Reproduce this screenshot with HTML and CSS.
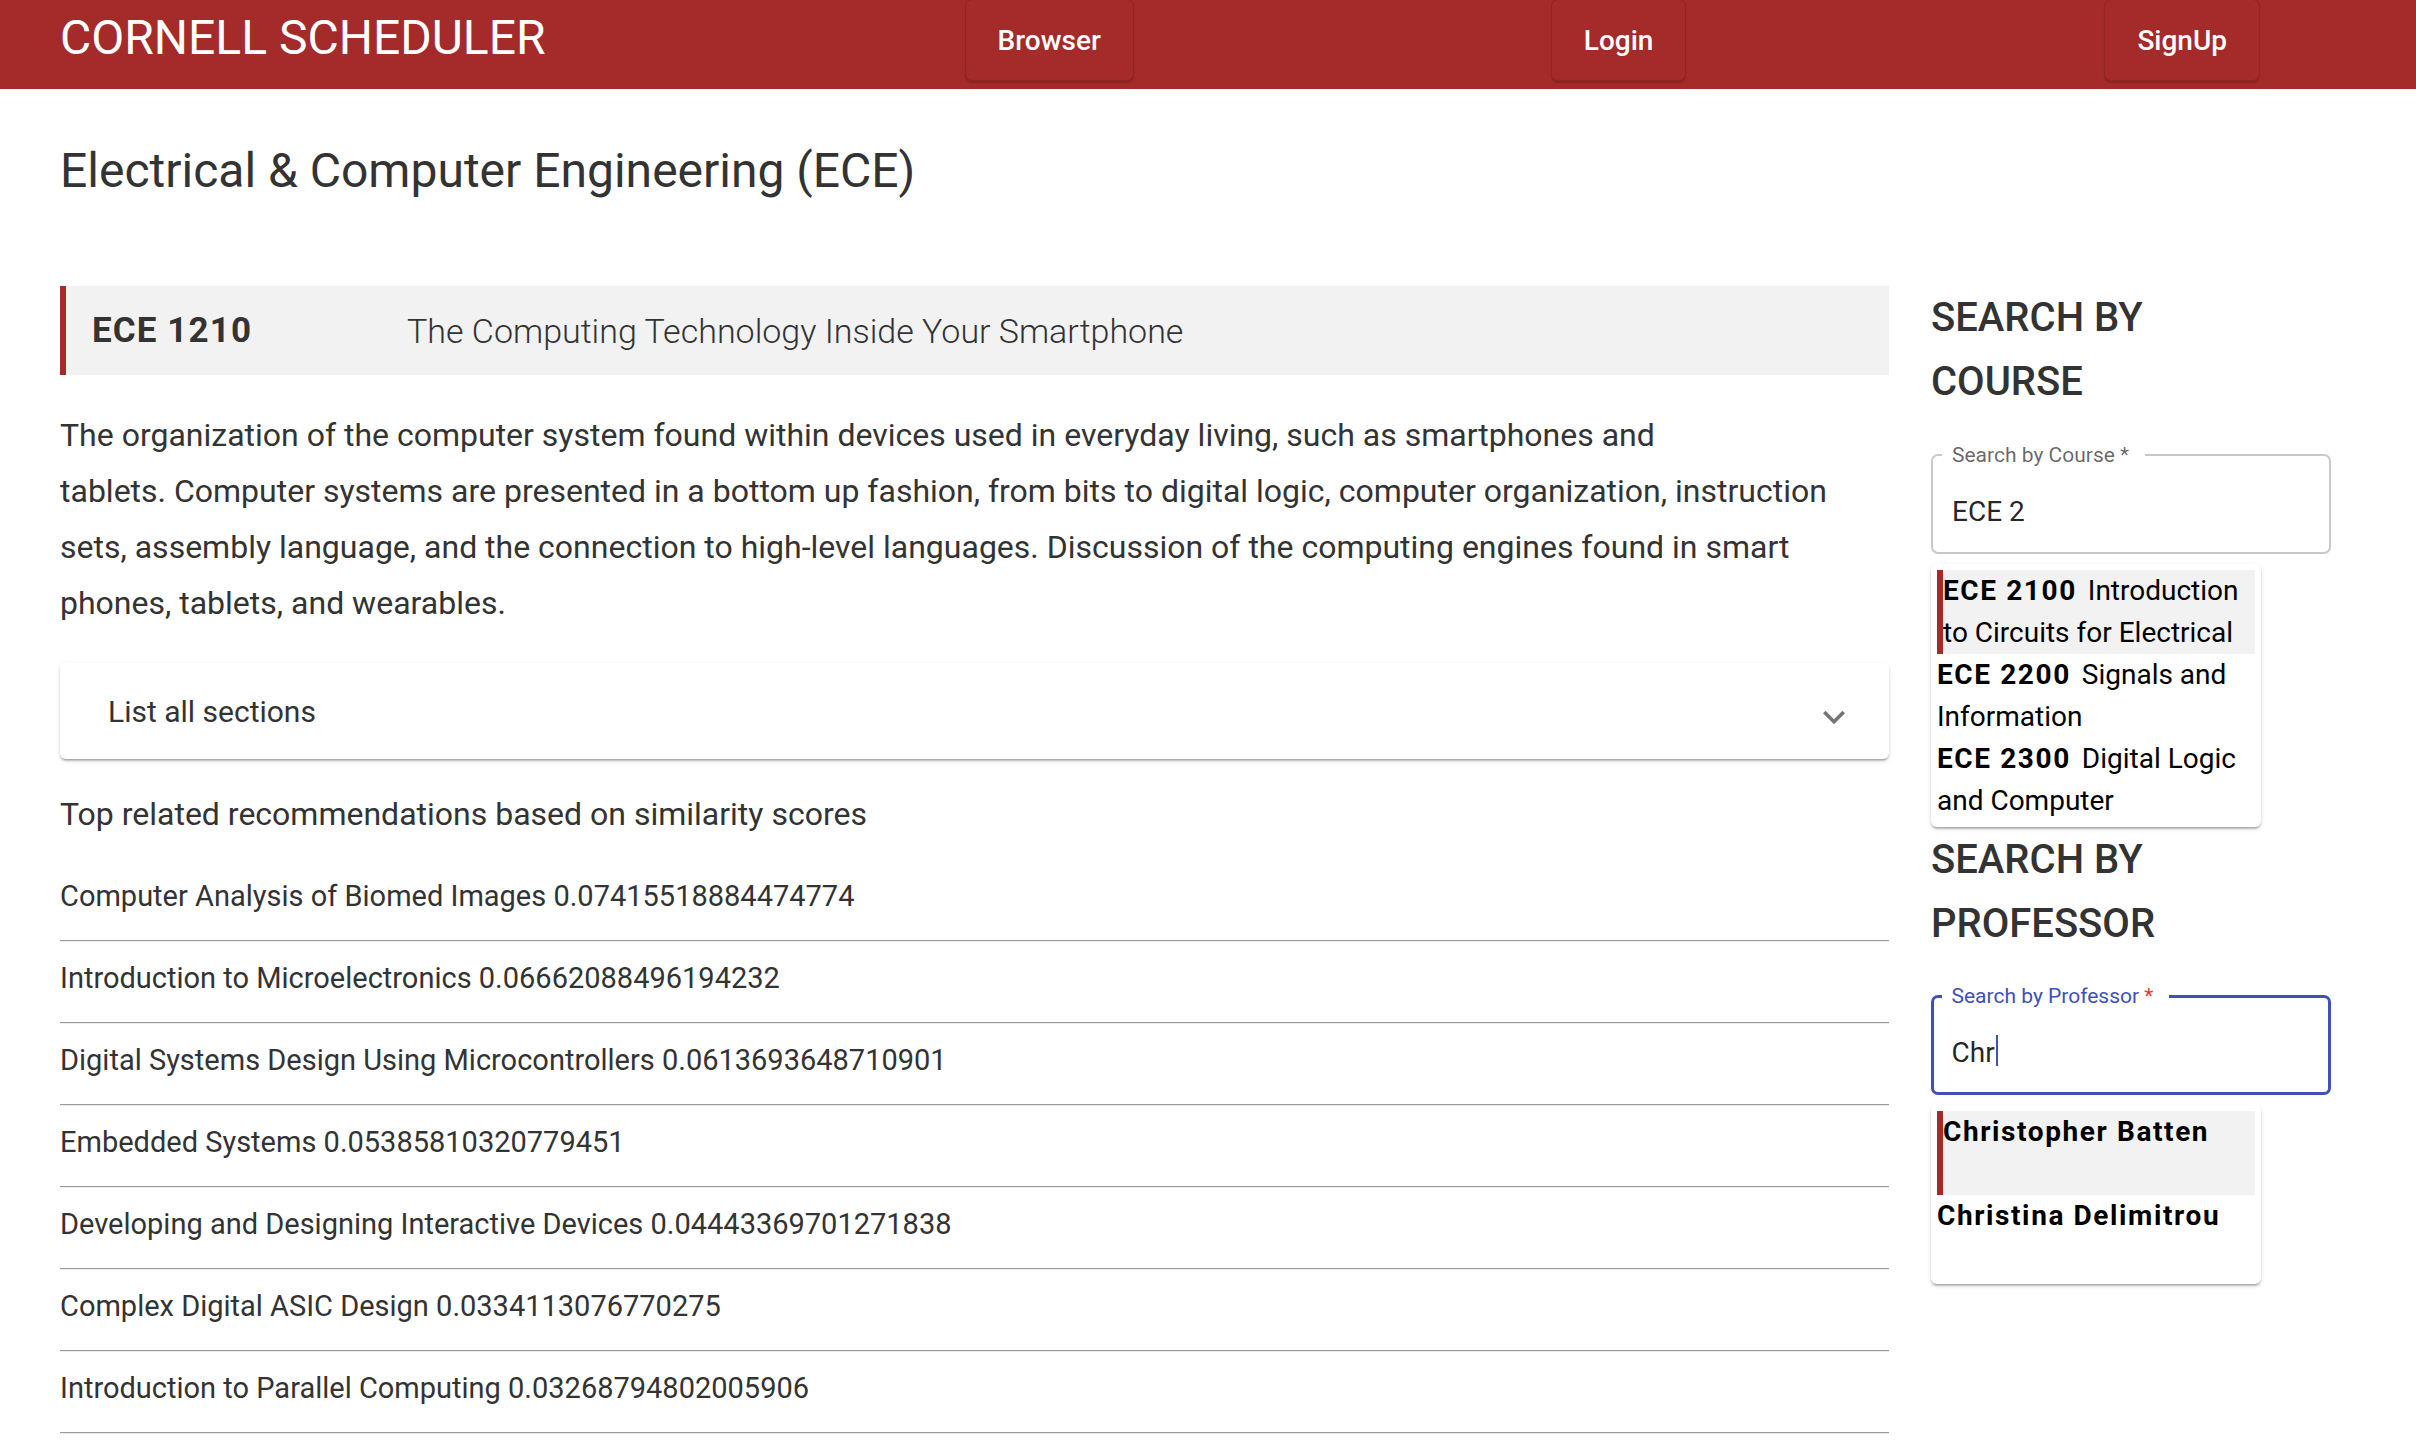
FILE: index.html
```html
<!DOCTYPE html>
<html lang="en">
<head>
<meta charset="utf-8">
<title>Cornell Scheduler</title>
<link rel="stylesheet" href="styles.css">
</head>
<body>
<header class="topbar">
  <div class="brand">CORNELL SCHEDULER</div>
  <nav class="nav">
    <button class="nav-btn">Browser</button>
    <button class="nav-btn login">Login</button>
    <button class="nav-btn signup">SignUp</button>
  </nav>
</header>
<main class="page">
  <h1 class="dept">Electrical &amp; Computer Engineering (ECE)</h1>
  <div class="layout">
    <section class="course">
      <div class="course-head">
        <span class="code">ECE 1210</span>
        <span class="name">The Computing Technology Inside Your Smartphone</span>
      </div>
      <p class="desc">The organization of the computer system found within devices used in everyday living, such as smartphones and<br>tablets. Computer systems are presented in a bottom up fashion, from bits to digital logic, computer organization, instruction<br>sets, assembly language, and the connection to high-level languages. Discussion of the computing engines found in smart<br>phones, tablets, and wearables.</p>
      <div class="accordion">
        <span class="acc-label">List all sections</span>
        <svg class="acc-icon" viewBox="0 0 24 24" width="44" height="44"><path d="M16.59 8.59 12 13.17 7.41 8.59 6 10l6 6 6-6z"/></svg>
      </div>
      <p class="rec-title">Top related recommendations based on similarity scores</p>
      <ul class="recs">
        <li><div class="rec-text">Computer Analysis of Biomed Images 0.07415518884474774</div><hr class="rule"></li>
        <li><div class="rec-text">Introduction to Microelectronics 0.06662088496194232</div><hr class="rule"></li>
        <li><div class="rec-text">Digital Systems Design Using Microcontrollers 0.0613693648710901</div><hr class="rule"></li>
        <li><div class="rec-text">Embedded Systems 0.05385810320779451</div><hr class="rule"></li>
        <li><div class="rec-text">Developing and Designing Interactive Devices 0.04443369701271838</div><hr class="rule"></li>
        <li><div class="rec-text">Complex Digital ASIC Design 0.0334113076770275</div><hr class="rule"></li>
        <li><div class="rec-text">Introduction to Parallel Computing 0.03268794802005906</div><hr class="rule"></li>
      </ul>
    </section>
    <aside class="side">
      <h2 class="side-heading">SEARCH BY COURSE</h2>
      <div class="field">
        <span class="field-label">Search by Course *</span>
        <div class="field-value">ECE 2</div>
      </div>
      <div class="menu">
        <div class="menu-item active"><div class="line"><b class="bold">ECE 2100</b> Introduction</div><div class="line">to Circuits for Electrical</div></div>
        <div class="menu-item"><div class="line"><b class="bold">ECE 2200</b> Signals and</div><div class="line">Information</div></div>
        <div class="menu-item"><div class="line"><b class="bold">ECE 2300</b> Digital Logic</div><div class="line">and Computer</div></div>
      </div>
      <h2 class="side-heading second">SEARCH BY PROFESSOR</h2>
      <div class="field focused">
        <span class="field-label">Search by Professor <span class="req">*</span></span>
        <div class="field-value">Chr<span class="caret"></span></div>
      </div>
      <div class="menu">
        <div class="menu-item active"><div class="line"><b class="bold">Christopher Batten</b></div></div>
        <div class="menu-item"><div class="line"><b class="bold">Christina Delimitrou</b></div></div>
      </div>
    </aside>
  </div>
</main>
</body>
</html>
```

FILE: styles.css
```css
* { box-sizing: border-box; }

body {
  margin: 0;
  background: #ffffff;
  font-family: Roboto, "Liberation Sans", sans-serif;
  color: #333333;
}

.topbar {
  display: flex;
  align-items: flex-start;
  height: 89px;
  background: #a52a2a;
  overflow: hidden;
}

.brand {
  padding: 10px 0 0 60px;
  font-size: 48px;
  line-height: 56px;
  font-weight: 400;
  color: #ffffff;
}

.nav {
  display: flex;
  margin-left: auto;
  padding-right: 156px;
}

.nav-btn {
  margin-top: -1px;
  height: 82px;
  padding: 0 32px;
  background: #a52a2a;
  color: #ffffff;
  font-family: Roboto, "Liberation Sans", sans-serif;
  font-size: 28px;
  font-weight: 500;
  border: 1px solid rgba(0, 0, 0, 0.12);
  border-radius: 7px;
  box-shadow: 0 2px 1px rgba(0, 0, 0, 0.14);
}

.nav-btn.login {
  margin-left: 417px;
}

.nav-btn.signup {
  margin-left: 418px;
}

.page {
  padding-left: 60px;
}

.dept {
  margin: 52px 0 0;
  font-size: 48px;
  line-height: 59px;
  font-weight: 400;
  color: #333333;
}

.layout {
  display: grid;
  grid-template-columns: 1829px 400px;
  column-gap: 42px;
  margin-top: 86px;
  align-items: start;
}

.course-head {
  display: flex;
  align-items: center;
  height: 89px;
  background: #f2f2f2;
  border-left: 6px solid #a52a2a;
  padding-left: 26px;
}

.code {
  width: 315px;
  font-size: 35px;
  font-weight: 700;
  letter-spacing: 1.1px;
  color: #333333;
}

.name {
  font-size: 34px;
  font-weight: 300;
  color: #333333;
}

.desc {
  margin: 32px 0 0;
  font-size: 32px;
  line-height: 56px;
  color: #333333;
}

.accordion {
  display: flex;
  align-items: center;
  justify-content: space-between;
  height: 96px;
  margin-top: 32px;
  padding: 0 33px 0 48px;
  background: #ffffff;
  border-radius: 6px;
  box-shadow: 0 3px 2px -2px rgba(0, 0, 0, 0.2), 0 2px 2px rgba(0, 0, 0, 0.14), 0 2px 5px rgba(0, 0, 0, 0.12);
}

.acc-label {
  font-size: 30px;
  color: #333333;
}

.acc-icon {
  margin-top: 12px;
  fill: rgba(0, 0, 0, 0.54);
}

.rec-title {
  margin: 33px 0 0;
  font-size: 32px;
  line-height: 45px;
  color: #333333;
}

.recs {
  list-style: none;
  margin: 38px 0 0;
  padding: 0;
}

.rec-text {
  font-size: 29px;
  line-height: 42px;
  color: #333333;
}

.rule {
  height: 0;
  margin: 23px 0 15px;
  border: 0;
  border-top: 1px solid #9a9a9a;
  border-bottom: 1px solid #ededed;
}

.side-heading {
  max-width: 340px;
  margin: 0;
  font-size: 40px;
  line-height: 64px;
  font-weight: 500;
  color: #333333;
}

.side-heading.second {
  margin-top: 1px;
}

.field {
  position: relative;
  height: 100px;
  margin-top: 40px;
  border: 2px solid #c8c8c8;
  border-radius: 7px;
  padding: 36px 0 0 19px;
}

.field.focused {
  margin-top: 39px;
  border: 3.5px solid #3f51b5;
  padding: 35px 0 0 17.5px;
}

.field-label {
  position: absolute;
  top: -13px;
  left: 9px;
  padding: 0 16px 0 10px;
  background: #ffffff;
  font-size: 21px;
  line-height: 24px;
  color: rgba(0, 0, 0, 0.6);
}

.field.focused .field-label {
  top: -14px;
  left: 7.5px;
  color: #3f51b5;
}

.req {
  color: #e53935;
}

.field-value {
  font-size: 28px;
  line-height: 40px;
  color: rgba(0, 0, 0, 0.87);
}

.caret {
  display: inline-block;
  width: 2px;
  height: 31px;
  margin-left: 1px;
  vertical-align: -4px;
  background: #3f51b5;
}

.menu {
  width: 330px;
  margin-top: 10px;
  padding: 6px 6px 5px;
  background: #ffffff;
  border-radius: 6px;
  box-shadow: 0 3px 2px -2px rgba(0, 0, 0, 0.2), 0 2px 2px rgba(0, 0, 0, 0.14), 0 2px 5px rgba(0, 0, 0, 0.12);
}

.menu-item {
  height: 84px;
  font-size: 28px;
  line-height: 42px;
  color: #000000;
}

.menu-item.active {
  background: #f2f2f2;
  border-left: 6px solid #a52a2a;
}

.line {
  white-space: nowrap;
}

.bold {
  font-weight: 700;
  letter-spacing: 1.6px;
  margin-right: 4px;
}
```
